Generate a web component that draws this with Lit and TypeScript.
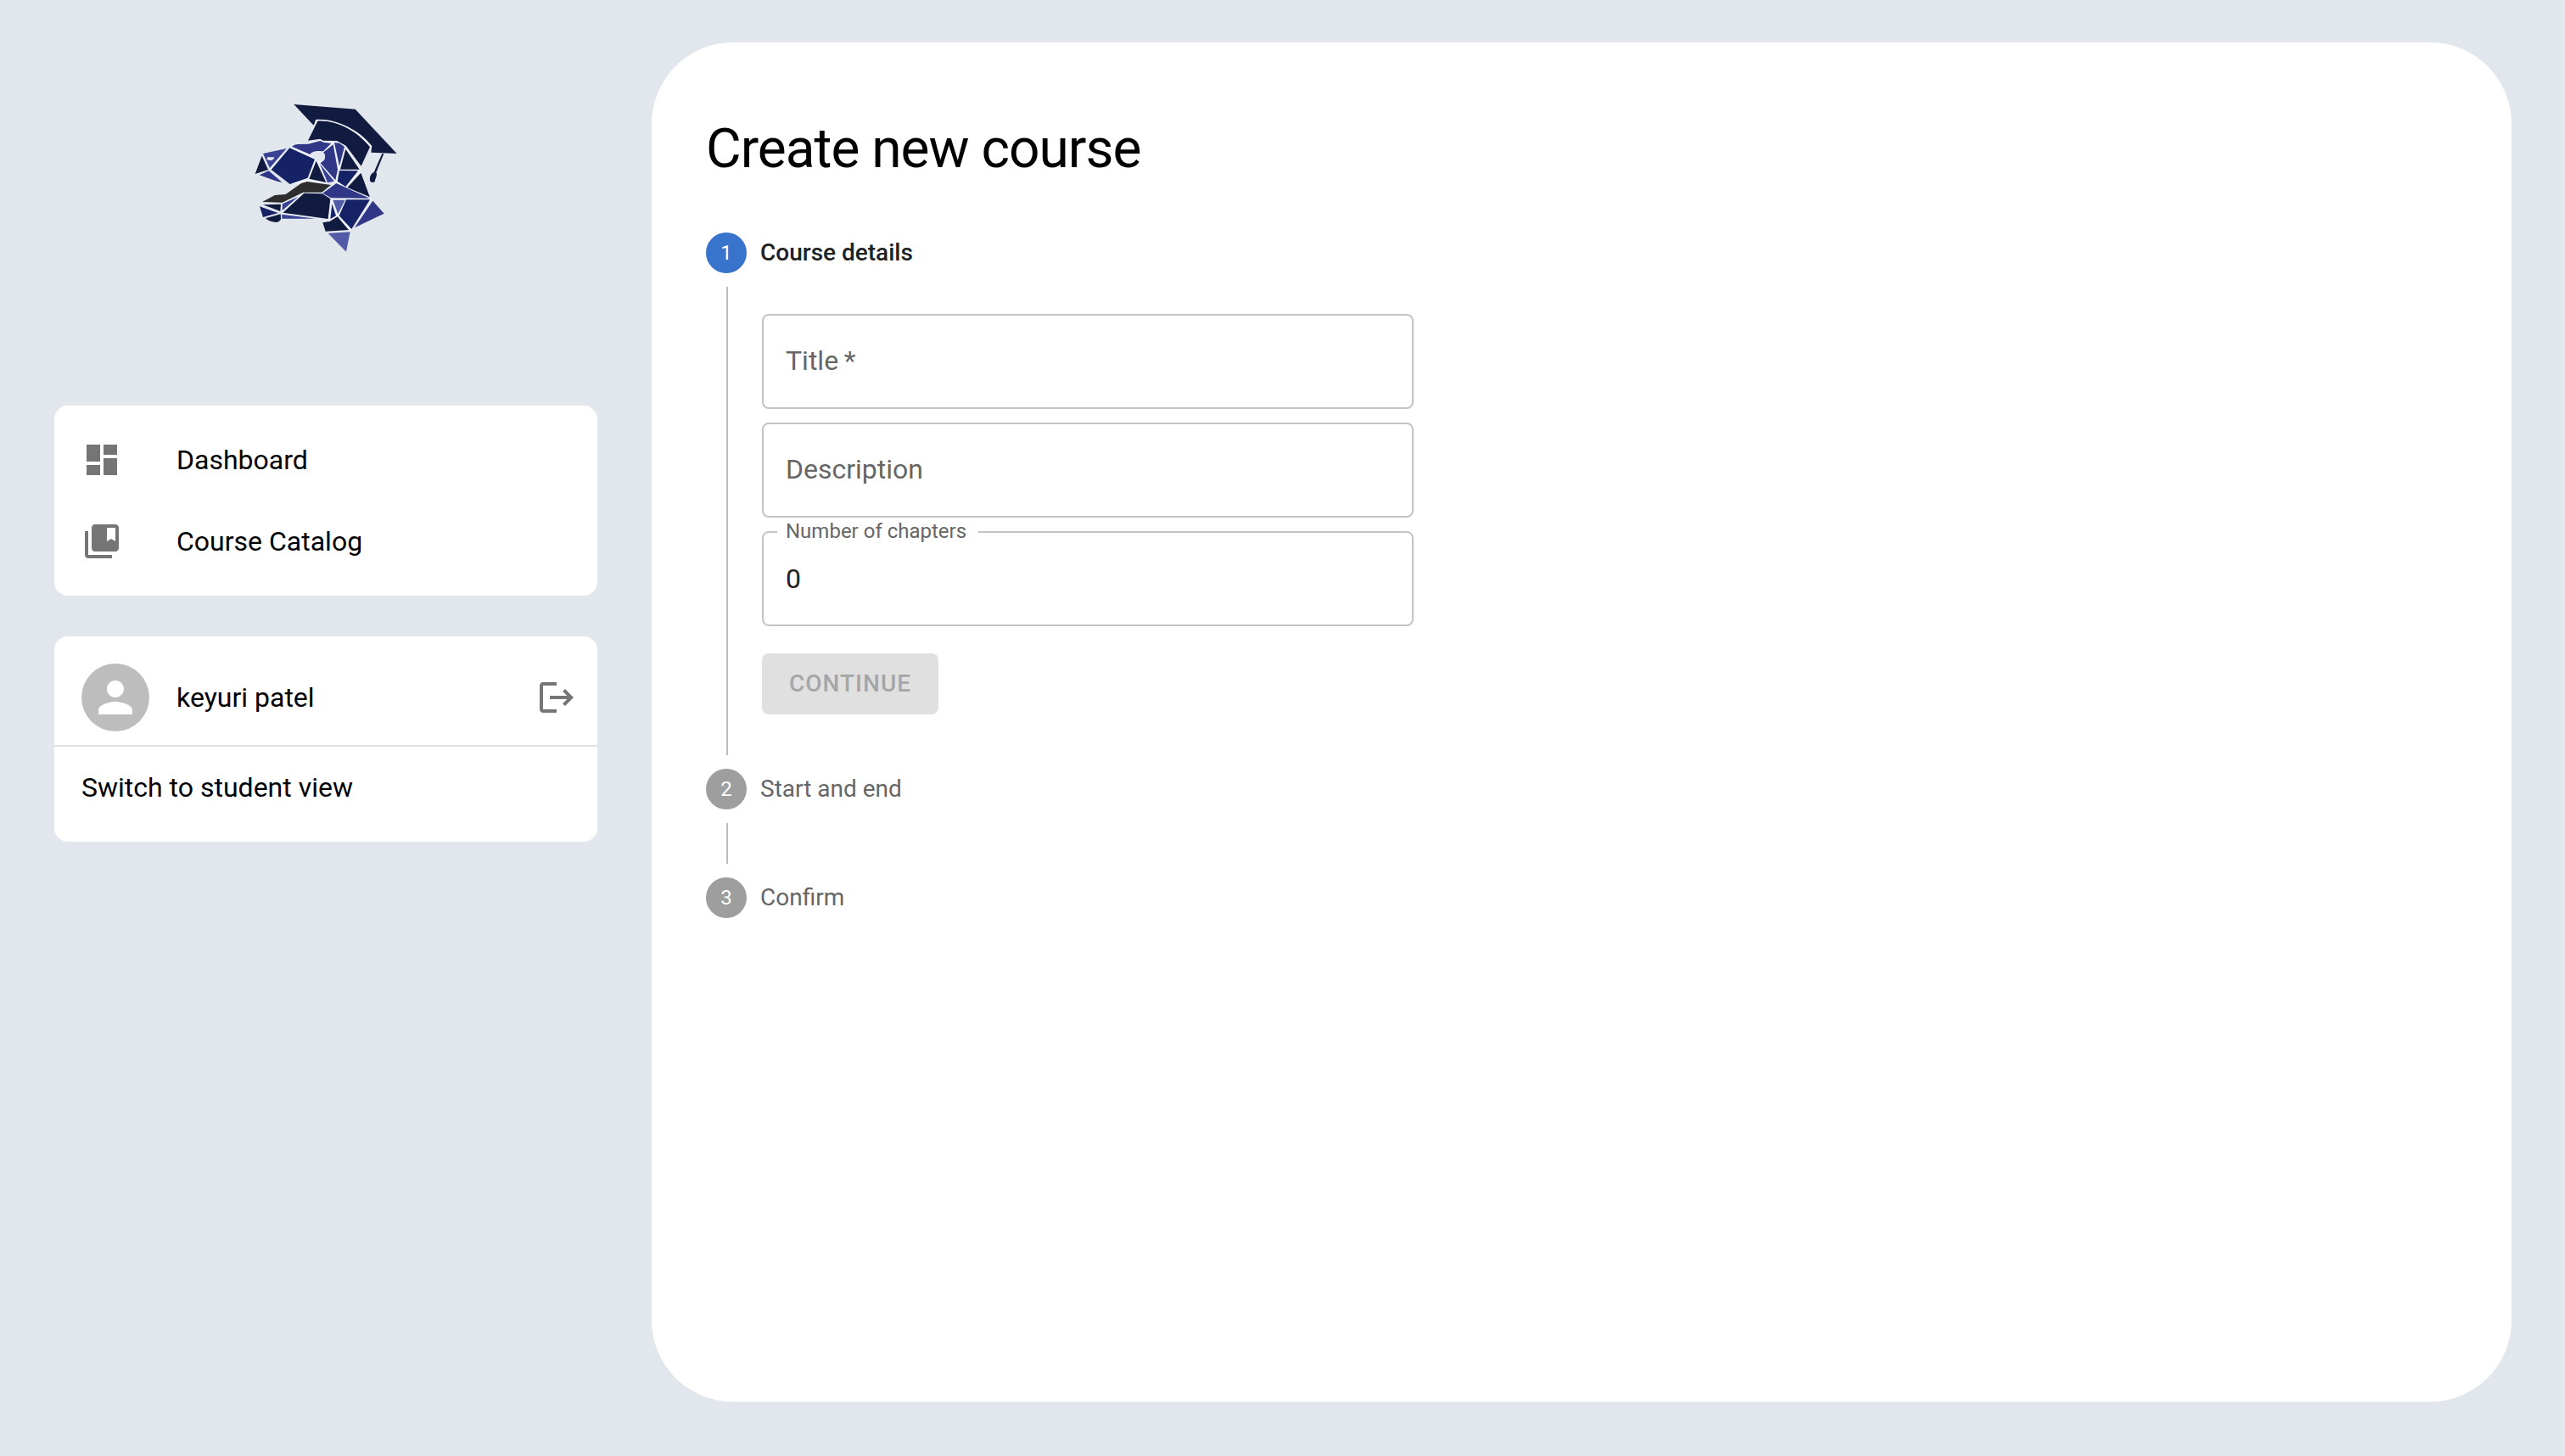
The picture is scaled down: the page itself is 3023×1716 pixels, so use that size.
import { LitElement, html, css, svg, nothing } from "lit";
import { customElement, property, state } from "lit/decorators.js";

const DARK = "#111a3f";
const NAVY = "#152265";
const INDIGO = "#303787";
const VIOLET = "#3a4296";
const LIGHT = "#525ba6";
const MOUTH = "#2d2d2e";

/** Facets of the dinosaur head with its graduation cap. */
const facets: Array<[string, string]> = [
  [DARK, "M199 39L416 56L563 213L472 209L475 186C430 130 350 88 276 93L270 112L266 110Z"],
  [DARK, "M283 98C350 94 425 135 468 190L437 257L383 185L352 168L302 167L292 161L249 167Z"],
  [DARK, "M511 213L517 214L490 280C496 288 486 303 485 313Q477 317 470 313C464 300 470 284 482 279Z"],
  [DARK, "M86 221L108 270L62 285Z"],
  [VIOLET, "M90 213L173 195L114 264Z"],
  [INDIGO, "M110 274L158 315L140 311L77 289Z"],
  [NAVY, "M184 193L273 233L248 299L185 321L119 270Z"],
  [INDIGO, "M192 188Q200 181 213 180L250 179L292 168L304 173L331 177L303 205Q296 206 290 204Q275 204 268 212L256 216Z"],
  [INDIGO, "M338 181L354 270L346 307L293 247L306 236Q313 216 303 209Z"],
  [DARK, "M278 239L313 315L253 302Z"],
  [VIOLET, "M291 250L342 311L318 316Z"],
  [INDIGO, "M342 174L360 176L378 189L360 257Z"],
  [DARK, "M382 197L431 269L363 269Z"],
  [NAVY, "M360 273L426 274L382 330L353 311Z"],
  [DARK, "M436 281L468 367L388 333Z"],
  [INDIGO, "M349 318L467 371L330 370L301 353Z"],
  [MOUTH, "M246 312L330 324L298 350L232 350L158 386L87 384L132 360L170 357L225 318Z"],
  [DARK, "M235 353L300 355L328 373L320 444L160 422Z"],
  [DARK, "M90 394L153 392L151 417Z"],
  [NAVY, "M78 400L143 423L90 438Z"],
  [DARK, "M101 441L152 427L153 445Q148 456 136 456Q115 455 101 444Z"],
  [VIOLET, "M158 391L214 366L158 415Z"],
  [VIOLET, "M157 428L275 443L157 443Z"],
  [NAVY, "M334 391L348 433L328 444Z"],
  [LIGHT, "M337 377L380 377L355 427Z"],
  [NAVY, "M384 376L468 376L403 480L359 433Z"],
  [INDIGO, "M478 380L518 425L414 475Z"],
  [DARK, "M301 457L326 453L353 436L393 483L311 488Z"],
  [LIGHT, "M320 495L398 490L384 560Z"],
];

const icons = {
  dashboard: "M3 13h8V3H3v10zm0 8h8v-6H3v6zm10 0h8V11h-8v10zm0-18v6h8V3h-8z",
  catalog:
    "M4 6H2v14c0 1.1.9 2 2 2h14v-2H4V6zm16-4H8c-1.1 0-2 .9-2 2v12c0 1.1.9 2 2 2h12c1.1 0 2-.9 2-2V4c0-1.1-.9-2-2-2zm0 10l-2.5-1.5L15 12V4h5v8z",
  person:
    "M12 12c2.21 0 4-1.79 4-4s-1.79-4-4-4-4 1.79-4 4 1.79 4 4 4zm0 2c-2.67 0-8 1.34-8 4v2h16v-2c0-2.66-5.33-4-8-4z",
  logout:
    "M17 7l-1.41 1.41L18.17 11H8v2h10.17l-2.58 2.58L17 17l5-5zM4 5h8V3H4c-1.1 0-2 .9-2 2v14c0 1.1.9 2 2 2h8v-2H4V5z",
};

const icon = (d: string) => html`
  <svg class="icon" viewBox="0 0 24 24" aria-hidden="true"><path d=${d}></path></svg>
`;

const base = css`
  * {
    box-sizing: border-box;
  }
  button,
  input {
    font: inherit;
    color: inherit;
    margin: 0;
    padding: 0;
    border: 0;
    background: none;
  }
  a {
    color: inherit;
    text-decoration: none;
  }
  .icon {
    display: block;
    flex: none;
    width: 48px;
    height: 48px;
    fill: currentColor;
  }
`;

@customElement("app-logo")
class AppLogo extends LitElement {
  static styles = css`
    :host {
      display: block;
    }
    .logo {
      display: block;
      width: 208px;
      height: 200px;
      margin: 0 auto;
    }
  `;
  render() {
    return html`
      <svg class="logo" viewBox="0 0 624 600" role="img" aria-label="Home">
        <path
          fill="#eef1f8"
          d="M184 191L292 165L345 171L382 190L434 268L470 368L472 376L404 482L394 488L350 440L322 446L157 425L152 390L235 350L300 352L346 316L186 320L116 268L110 268Z"
        ></path>
        <path fill="none" stroke="#eef1f8" stroke-width="4" d="M280 96C350 91 430 132 472 188"></path>
        ${facets.map(([fill, d]) => svg`<path fill=${fill} d=${d}></path>`)}
        <path
          fill="#e2e7ee"
          d="M256 214Q268 203 290 204Q303 204 304 211Q312 218 308 226Q311 233 302 236Q292 240 286 237L270 232Z"
        ></path>
        <path fill="#e2e7ee" d="M104 228Q108 223 116 226L130 226Q130 233 122 236Q110 238 104 234Z"></path>
      </svg>
    `;
  }
}

@customElement("app-sidebar")
class AppSidebar extends LitElement {
  static styles = [
    base,
    css`
      :host {
        display: flex;
        flex-direction: column;
        gap: 48px;
        padding: 110px 64px 64px;
      }
      .brand {
        display: block;
        margin-bottom: 120px;
      }
      .card {
        background: #fff;
        border-radius: 16px;
        padding-bottom: 16px;
      }
      .nav {
        padding-top: 16px;
      }
      .item {
        display: flex;
        align-items: center;
        width: 100%;
        height: 96px;
        padding: 0 32px;
        text-align: left;
        cursor: pointer;
      }
      .item .icon {
        margin-right: 64px;
      }
      .icon {
        color: #757575;
      }
      .user {
        display: flex;
        align-items: center;
        gap: 32px;
        padding: 32px 24px 16px 32px;
        border-bottom: 2px solid #e0e0e0;
      }
      .avatar {
        display: grid;
        place-items: center;
        width: 80px;
        height: 80px;
        border-radius: 50%;
        background: #bdbdbd;
      }
      .avatar .icon {
        color: #fff;
        width: 60px;
        height: 60px;
      }
      .name {
        flex: 1;
      }
      .logout {
        cursor: pointer;
      }
    `,
  ];
  render() {
    return html`
      <a class="brand" href="#home"><app-logo></app-logo></a>
      <nav class="card nav">
        <a class="item" href="#dashboard">${icon(icons.dashboard)}<span>Dashboard</span></a>
        <a class="item" href="#catalog">${icon(icons.catalog)}<span>Course Catalog</span></a>
      </nav>
      <section class="card">
        <div class="user">
          <span class="avatar">${icon(icons.person)}</span>
          <span class="name">keyuri patel</span>
          <button class="logout" type="button" aria-label="Log out">${icon(icons.logout)}</button>
        </div>
        <button class="item" type="button">Switch to student view</button>
      </section>
    `;
  }
}

@customElement("app-field")
class AppField extends LitElement {
  static styles = [
    base,
    css`
      :host {
        display: block;
      }
      .field {
        position: relative;
        height: 112px;
        border: 2px solid #c4c4c4;
        border-radius: 8px;
      }
      .input {
        display: block;
        width: 100%;
        height: 100%;
        padding: 0 26px;
        color: #212121;
        outline: none;
        appearance: textfield;
      }
      .input::-webkit-inner-spin-button {
        display: none;
      }
      .label {
        position: absolute;
        left: 26px;
        top: 35px;
        line-height: 36px;
        color: #666;
        pointer-events: none;
      }
      .raised {
        left: 16px;
        top: -18px;
        padding: 0 14px 0 10px;
        background: #fff;
        font-size: 24px;
        line-height: 32px;
      }
    `,
  ];
  @property() label = "";
  @property() type = "text";
  @property() value = "";
  @property({ type: Boolean }) required = false;

  private onInput(e: Event) {
    this.value = (e.target as HTMLInputElement).value;
  }

  render() {
    return html`
      <div class="field">
        <input
          class="input"
          id="control"
          type=${this.type}
          .value=${this.value}
          ?required=${this.required}
          @input=${this.onInput}
        />
        <label class="label ${this.value ? "raised" : ""}" for="control"
          >${this.label}${this.required ? "\u2009*" : nothing}</label
        >
      </div>
    `;
  }
}

@customElement("course-stepper")
class CourseStepper extends LitElement {
  static styles = [
    base,
    css`
      :host {
        display: block;
      }
      .steps {
        list-style: none;
        margin: 0;
        padding: 0;
      }
      .head {
        display: flex;
        align-items: center;
        gap: 16px;
        height: 48px;
        font-size: 28px;
        color: #666;
      }
      .badge {
        display: grid;
        place-items: center;
        width: 48px;
        height: 48px;
        border-radius: 50%;
        background: #9e9e9e;
        color: #fff;
        font-size: 24px;
      }
      .active .badge {
        background: #3873cc;
      }
      .active .title {
        font-weight: 500;
        color: #212121;
      }
      .body {
        margin: 16px 0 16px 24px;
        border-left: 2px solid #bdbdbd;
        min-height: 48px;
      }
      .active .body {
        padding: 32px 0 48px 40px;
      }
      .form {
        display: flex;
        flex-direction: column;
        align-items: flex-start;
        gap: 16px;
      }
      .form app-field {
        width: 100%;
        max-width: 768px;
      }
      .continue {
        height: 72px;
        margin-top: 16px;
        padding: 0 32px;
        border-radius: 8px;
        background: #e0e0e0;
        color: #a6a6a6;
        font-size: 28px;
        font-weight: 500;
        letter-spacing: 1px;
        text-transform: uppercase;
      }
    `,
  ];
  @state() private active = 0;
  private titles = ["Course details", "Start and end", "Confirm"];

  private details() {
    return html`
      <form class="form">
        <app-field label="Title" required></app-field>
        <app-field label="Description"></app-field>
        <app-field label="Number of chapters" type="number" value="0"></app-field>
        <button class="continue" type="submit" disabled>Continue</button>
      </form>
    `;
  }

  render() {
    const last = this.titles.length - 1;
    return html`
      <ol class="steps">
        ${this.titles.map(
          (title, i) => html`
            <li class="step ${i === this.active ? "active" : ""}">
              <div class="head">
                <span class="badge">${i + 1}</span>
                <span class="title">${title}</span>
              </div>
              ${i < last ? html`<div class="body">${i === this.active ? this.details() : nothing}</div>` : nothing}
            </li>
          `
        )}
      </ol>
    `;
  }
}

@customElement("app-root")
class AppRoot extends LitElement {
  static styles = [
    base,
    css`
      :host {
        display: grid;
        grid-template-columns: 768px 1fr;
        min-height: 100vh;
        background: #e2e7ee;
        color: #000;
        font-family: Roboto, "Liberation Sans", sans-serif;
        font-size: 32px;
        line-height: 48px;
      }
      .page {
        margin: 50px 63px 64px 0;
        padding: 86px 64px 64px;
        border-radius: 96px;
        background: #fff;
      }
      .heading {
        margin: 0 0 58px;
        font-size: 64px;
        line-height: 80px;
        font-weight: 400;
        letter-spacing: -1px;
      }
    `,
  ];
  render() {
    return html`
      <app-sidebar></app-sidebar>
      <main class="page">
        <h1 class="heading">Create new course</h1>
        <course-stepper></course-stepper>
      </main>
    `;
  }
}
